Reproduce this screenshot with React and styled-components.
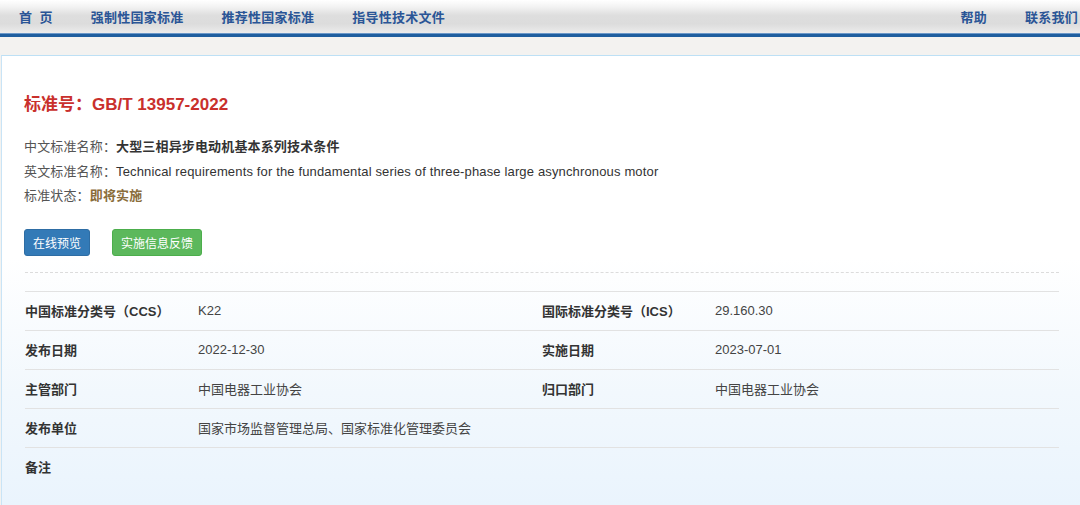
import React from "react";
import styled, { createGlobalStyle } from "styled-components";

const Global = createGlobalStyle`
  html, body { margin: 0; padding: 0; overflow: hidden; background: #f3f2f0; }
  body {
    font-family: "Liberation Sans", Arial, "Noto Sans CJK SC", sans-serif;
    font-size: 13px;
    color: #333;
  }
`;

const Page = styled.div`
  width: 1097px;
  height: 505px;
  display: flex;
  flex-direction: column;
`;

const NavBar = styled.nav`
  height: 34px;
  display: flex;
  align-items: center;
  justify-content: space-between;
  background: linear-gradient(to bottom, #ffffff 0%, #f4f4f4 18%, #dedede 45%, #dcdcdc 70%, #e9e9e9 92%, #eeeeee 100%);
  border-bottom: 3px solid #1f5e9f;
  box-shadow: inset 0 -1px 0 #6b98c9;
`;

const NavGroup = styled.div`
  display: flex;
  align-items: center;
  height: 100%;
`;

const NavItem = styled.a`
  padding: 0 19px;
  font-family: "Noto Sans CJK SC", sans-serif;
  font-weight: 700;
  font-size: 13px;
  letter-spacing: 0.25px;
  color: #2a5596;
  text-decoration: none;
  white-space: nowrap;
  line-height: 34px;
  word-spacing: ${(p) => (p.$spaced ? "4px" : "0")};
`;

const Gap = styled.div`
  height: 18px;
  background: #f3f2f0;
  flex: none;
`;

const Panel = styled.section`
  margin-left: 1px;
  width: 1081px;
  box-sizing: border-box;
  flex: 1;
  border-top: 1px solid #bde0f5;
  border-left: 1px solid #c9e4f6;
  background: linear-gradient(to bottom, #ffffff 0%, #ffffff 45%, #f2f8fd 75%, #eaf4fd 100%);
  padding: 37px 22px 0 22px;
`;

const Title = styled.h4`
  margin: 0;
  font-size: 17px;
  line-height: 24px;
  font-weight: 700;
  color: #c9302c;
  font-family: "Liberation Sans", Arial, "Noto Sans CJK SC", sans-serif;
`;

const InfoList = styled.div`
  margin-top: 18px;
  display: flex;
  flex-direction: column;
`;

const InfoLine = styled.div`
  line-height: 24.5px;
  color: #555;
  white-space: nowrap;
  letter-spacing: 0.15px;
`;

const InfoValue = styled.span`
  font-weight: ${(p) => (p.$bold ? 700 : 400)};
  color: ${(p) => p.$color || "#333"};
`;

const Buttons = styled.div`
  margin-top: 20px;
  display: flex;
  gap: 22px;
`;

const Btn = styled.button`
  height: 27px;
  padding: 0 8px;
  border-radius: 3px;
  border: 1px solid ${(p) => (p.$variant === "green" ? "#4cae4c" : "#2e6da4")};
  background: ${(p) => (p.$variant === "green" ? "#5cb85c" : "#337ab7")};
  color: #fff;
  font-size: 12px;
  font-family: "Noto Sans CJK SC", sans-serif;
  cursor: pointer;
`;

const Dotted = styled.hr`
  margin: 16px 0 0 1px;
  width: 1034px;
  border: 0;
  border-top: 1px dashed #dcdcdc;
  height: 0;
`;

const Table = styled.table`
  margin-top: 18px;
  margin-left: 1px;
  width: 1034px;
  border-collapse: collapse;
  table-layout: fixed;
`;

const Cell = styled.td`
  border-top: 1px solid #e2e2e2;
  height: 38px;
  padding: 0;
  vertical-align: middle;
  font-size: 13px;
  font-weight: ${(p) => (p.$label ? 700 : 400)};
  color: ${(p) => (p.$label ? "#333" : "#444")};
  white-space: nowrap;
`;

const rows = [
  ["中国标准分类号（CCS）", "K22", "国际标准分类号（ICS）", "29.160.30"],
  ["发布日期", "2022-12-30", "实施日期", "2023-07-01"],
  ["主管部门", "中国电器工业协会", "归口部门", "中国电器工业协会"],
  ["发布单位", "国家市场监督管理总局、国家标准化管理委员会", "", ""],
  ["备注", "", "", ""],
];

export default function App() {
  return (
    <>
      <Global />
      <Page>
        <NavBar>
          <NavGroup>
            <NavItem $spaced>首 页</NavItem>
            <NavItem>强制性国家标准</NavItem>
            <NavItem>推荐性国家标准</NavItem>
            <NavItem>指导性技术文件</NavItem>
          </NavGroup>
          <NavGroup>
            <NavItem>帮助</NavItem>
            <NavItem>联系我们</NavItem>
          </NavGroup>
        </NavBar>
        <Gap />
        <Panel>
          <Title>标准号：GB/T 13957-2022</Title>
          <InfoList>
            <InfoLine>
              中文标准名称：<InfoValue $bold>大型三相异步电动机基本系列技术条件</InfoValue>
            </InfoLine>
            <InfoLine>
              英文标准名称：<InfoValue>Technical requirements for the fundamental series of three-phase large asynchronous motor</InfoValue>
            </InfoLine>
            <InfoLine>
              标准状态：<InfoValue $bold $color="#8a6d3b">即将实施</InfoValue>
            </InfoLine>
          </InfoList>
          <Buttons>
            <Btn>在线预览</Btn>
            <Btn $variant="green">实施信息反馈</Btn>
          </Buttons>
          <Dotted />
          <Table>
            <colgroup>
              <col style={{ width: "173px" }} />
              <col style={{ width: "344px" }} />
              <col style={{ width: "173px" }} />
              <col style={{ width: "344px" }} />
            </colgroup>
            <tbody>
              {rows.map((r, i) => (
                <tr key={i}>
                  <Cell $label>{r[0]}</Cell>
                  <Cell>{r[1]}</Cell>
                  <Cell $label>{r[2]}</Cell>
                  <Cell>{r[3]}</Cell>
                </tr>
              ))}
            </tbody>
          </Table>
        </Panel>
      </Page>
    </>
  );
}
